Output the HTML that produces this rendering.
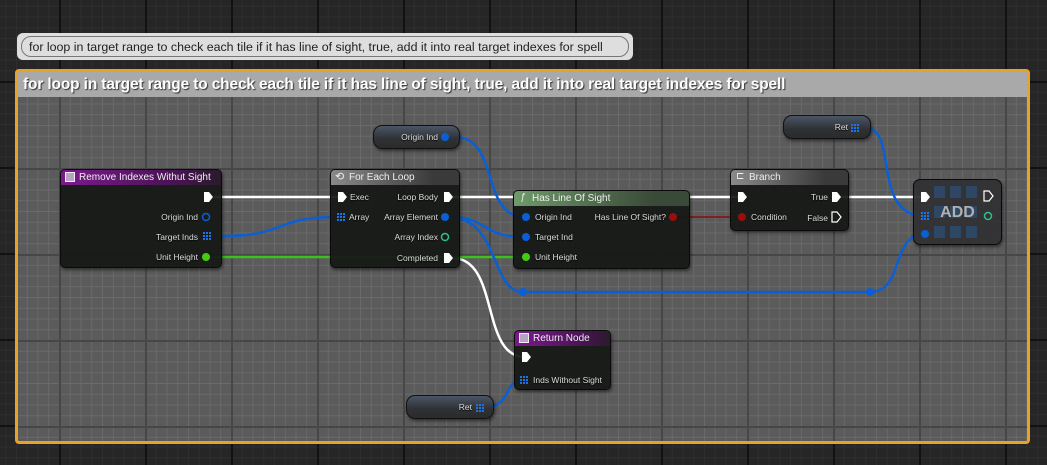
<!DOCTYPE html>
<html><head><style>
*{margin:0;padding:0;box-sizing:border-box}
body{width:1047px;height:465px;overflow:hidden;position:relative;font-family:"Liberation Sans",sans-serif;
background-color:#262626;
background-image:
linear-gradient(90deg,#121212 2px,transparent 2px),
linear-gradient(#121212 2px,transparent 2px),
linear-gradient(90deg,#2e2e2e 1px,transparent 1px),
linear-gradient(#2e2e2e 1px,transparent 1px);
background-size:86px 86px,86px 86px,10.75px 10.75px,10.75px 10.75px;
background-position:59px 81px,59px 81px,59px 81px,59px 81px;}
.bubble{position:absolute;left:17px;top:33px;width:616px;height:27px;background:#dedede;border-radius:6px;}
.bubble span{position:absolute;left:4px;top:3px;right:4px;bottom:3px;border:1px solid #777;border-radius:10px;font-size:12.4px;color:#222;padding:3px 0 0 7px;white-space:nowrap}
.comment{position:absolute;left:15px;top:69px;width:1015px;height:375px;border:3px solid #e8a228;border-radius:4px;
background-color:#5b5b5b;
background-image:
linear-gradient(90deg,#474747 2px,transparent 2px),
linear-gradient(#474747 2px,transparent 2px),
linear-gradient(90deg,#6a6a6a 1px,transparent 1px),
linear-gradient(#6a6a6a 1px,transparent 1px);
background-size:86px 86px,86px 86px,10.75px 10.75px,10.75px 10.75px;
background-position:41px 10px,41px 10px,41px 10px,41px 10px;}
.ctitle{position:absolute;left:0;top:0;right:0;height:25px;background:#a9a9a9;color:#fff;font-weight:bold;font-size:15.4px;padding:4px 0 0 5px;text-shadow:1px 1px 1px #333;white-space:nowrap;letter-spacing:-0.1px}
.node{position:absolute;background:rgba(22,24,22,.93);border:1px solid #0a0a0a;border-radius:5px;box-shadow:1px 2px 3px rgba(0,0,0,.5);font-size:9px;color:#ddd}
.hdr{height:15px;border-radius:4px 4px 0 0;color:#eee;font-size:10px;padding:2px 0 0 18px;position:relative}
.lbl{position:absolute;font-size:8.5px;color:#ddd;white-space:nowrap;text-shadow:0 1px 1px #000}
.r{text-align:right;width:120px}
.var{position:absolute;height:24px;border-radius:9px;background:linear-gradient(#4a5566,#2f3133 60%,#2b2b2b);border:1px solid #111;box-shadow:1px 2px 3px rgba(0,0,0,.5)}
svg{position:absolute;left:0;top:0}
</style></head><body>
<div class="bubble"><span>for loop in target range to check each tile if it has line of sight, true, add it into real target indexes for spell</span></div>
<div class="comment"><div class="ctitle">for loop in target range to check each tile if it has line of sight, true, add it into real target indexes for spell</div></div>

<svg width="1047" height="465">
<g fill="none" stroke-width="2.5">
<path d="M214 197 H342" stroke="#fff"/>
<path d="M452 197 H742" stroke="#fff"/>
<path d="M840 197 H925" stroke="#fff"/>
<path d="M452 258 C500 258,480 357,525 357" stroke="#fff"/>
<path d="M214 257 H525" stroke="#3fbf1f"/>
<path d="M222 236 C290 236,270 217,340 217" stroke="#0a5fd6"/>
<path d="M455 137 C500 137,480 217,525 217" stroke="#0a5fd6"/>
<path d="M448 217 C490 217,480 237,525 237" stroke="#0a5fd6"/>
<path d="M448 217 C500 217,490 292,523 292 H870 C905 292,890 234,925 234" stroke="#0a5fd6"/>
<path d="M864 127 C900 127,870 216,925 216" stroke="#0a5fd6"/>
<path d="M487 407 C510 407,505 380,522 380" stroke="#0a5fd6"/>
<path d="M675 217 H742" stroke="#8a0c0c" stroke-width="1.5"/>
</g>
<circle cx="523" cy="292" r="4" fill="#0a5fd6"/><circle cx="870" cy="292" r="4" fill="#0a5fd6"/>
</svg>

<div class="node" style="left:60px;top:169px;width:162px;height:99px">
<div class="hdr" style="background:linear-gradient(90deg,#7a1a8c,#4a1454 70%,#2a1a2c)"><span style="position:absolute;left:4px;top:2px;width:10px;height:10px;background:#b9a3c4;border:1px solid #eee"></span>Remove Indexes Withut Sight</div>
</div>
<div class="node" style="left:330px;top:169px;width:130px;height:99px">
<div class="hdr" style="background:linear-gradient(90deg,#8a8a8a,#3a3a3a 80%)"><span style="position:absolute;left:4px;top:0px;font-size:11px">⟲</span>For Each Loop</div>
</div>
<div class="node" style="left:513px;top:190px;width:177px;height:79px">
<div class="hdr" style="background:linear-gradient(90deg,#6e9a6a,#3a4a38 80%)"><span style="position:absolute;left:6px;top:1px;font-style:italic">ƒ</span>Has Line Of Sight</div>
</div>
<div class="node" style="left:730px;top:169px;width:119px;height:62px">
<div class="hdr" style="background:linear-gradient(90deg,#8a8a8a,#3a3a3a 80%)"><span style="position:absolute;left:5px;top:1px">⊏</span>Branch</div>
</div>
<div class="node" style="left:913px;top:179px;width:89px;height:66px;background:rgba(50,50,52,.95);border-radius:7px">
<div style="position:absolute;left:20px;top:6px;width:48px;height:52px;background-image:linear-gradient(90deg,#2e4a6a 11px,transparent 11px),linear-gradient(#505052 0,transparent 0);background-size:16px 100%;opacity:.9;-webkit-mask:linear-gradient(#000 12px,transparent 12px,transparent 20px,#000 20px,#000 32px,transparent 32px,transparent 40px,#000 40px);mask:linear-gradient(#000 12px,transparent 12px,transparent 20px,#000 20px,#000 32px,transparent 32px,transparent 40px,#000 40px)"></div>
<div style="position:absolute;left:0;right:0;top:24px;text-align:center;font-weight:bold;font-size:16px;color:#b0b0b0">ADD</div>
</div>
<div class="node" style="left:514px;top:330px;width:97px;height:60px">
<div class="hdr" style="background:linear-gradient(90deg,#7a1a8c,#4a1454 70%,#2a1a2c)"><span style="position:absolute;left:4px;top:2px;width:10px;height:10px;background:#b9a3c4;border:1px solid #eee"></span>Return Node</div>
</div>
<div class="var" style="left:373px;top:125px;width:87px"></div>
<div class="var" style="left:783px;top:115px;width:88px"></div>
<div class="var" style="left:406px;top:395px;width:88px"></div>

<svg width="1047" height="465">
<g fill="#fff">
<path d="M204 192 h5 l4 5 l-4 5 h-5z"/>
<path d="M338 192 h5 l4 5 l-4 5 h-5z"/>
<path d="M444 192 h5 l4 5 l-4 5 h-5z"/>
<path d="M444 253 h5 l4 5 l-4 5 h-5z"/>
<path d="M738 192 h5 l4 5 l-4 5 h-5z"/>
<path d="M832 192 h5 l4 5 l-4 5 h-5z"/>
<path d="M921 192 h5 l4 5 l-4 5 h-5z"/>
<path d="M522 352 h5 l4 5 l-4 5 h-5z"/>
</g>
<g fill="none" stroke="#fff" stroke-width="1.2">
<path d="M832 212 h5 l4 5 l-4 5 h-5z"/>
<path d="M984 191 h5 l4 5 l-4 5 h-5z"/>
</g>
<g fill="#0a5fd6">
<circle cx="445" cy="137" r="4"/><circle cx="445" cy="217" r="4"/>
<circle cx="526" cy="217" r="4"/><circle cx="526" cy="237" r="4"/>
<circle cx="925" cy="234" r="4"/>
</g>
<circle cx="206" cy="217" r="3.5" fill="none" stroke="#0a5fd6" stroke-width="1.5"/>
<circle cx="445" cy="237" r="3.5" fill="none" stroke="#2ec08a" stroke-width="1.5"/>
<circle cx="988" cy="216" r="3.5" fill="none" stroke="#2ec08a" stroke-width="1.5"/>
<circle cx="206" cy="257" r="4" fill="#44cc11"/><circle cx="526" cy="257" r="4" fill="#44cc11"/>
<circle cx="673" cy="217" r="4" fill="#9a0e0e"/><circle cx="742" cy="217" r="4" fill="#9a0e0e"/>
<g fill="#1c74e8">
<path d="M203 232h2v2h-2zM206 232h2v2h-2zM209 232h2v2h-2zM203 235h2v2h-2zM206 235h2v2h-2zM209 235h2v2h-2zM203 238h2v2h-2zM206 238h2v2h-2zM209 238h2v2h-2z"/>
<path d="M337 213h2v2h-2zM340 213h2v2h-2zM343 213h2v2h-2zM337 216h2v2h-2zM340 216h2v2h-2zM343 216h2v2h-2zM337 219h2v2h-2zM340 219h2v2h-2zM343 219h2v2h-2z"/>
<path d="M851 124h2v2h-2zM854 124h2v2h-2zM857 124h2v2h-2zM851 127h2v2h-2zM854 127h2v2h-2zM857 127h2v2h-2zM851 130h2v2h-2zM854 130h2v2h-2zM857 130h2v2h-2z"/>
<path d="M921 212h2v2h-2zM924 212h2v2h-2zM927 212h2v2h-2zM921 215h2v2h-2zM924 215h2v2h-2zM927 215h2v2h-2zM921 218h2v2h-2zM924 218h2v2h-2zM927 218h2v2h-2z"/>
<path d="M520 376h2v2h-2zM523 376h2v2h-2zM526 376h2v2h-2zM520 379h2v2h-2zM523 379h2v2h-2zM526 379h2v2h-2zM520 382h2v2h-2zM523 382h2v2h-2zM526 382h2v2h-2z"/>
<path d="M476 404h2v2h-2zM479 404h2v2h-2zM482 404h2v2h-2zM476 407h2v2h-2zM479 407h2v2h-2zM482 407h2v2h-2zM476 410h2v2h-2zM479 410h2v2h-2zM482 410h2v2h-2z"/>
</g>
</svg>

<div class="lbl r" style="left:78px;top:212px">Origin Ind</div>
<div class="lbl r" style="left:78px;top:232px">Target Inds</div>
<div class="lbl r" style="left:78px;top:252px">Unit Height</div>
<div class="lbl" style="left:350px;top:192px">Exec</div>
<div class="lbl" style="left:349px;top:212px">Array</div>
<div class="lbl r" style="left:318px;top:192px">Loop Body</div>
<div class="lbl r" style="left:318px;top:212px">Array Element</div>
<div class="lbl r" style="left:318px;top:232px">Array Index</div>
<div class="lbl r" style="left:318px;top:253px">Completed</div>
<div class="lbl r" style="left:318px;top:132px">Origin Ind</div>
<div class="lbl" style="left:535px;top:212px">Origin Ind</div>
<div class="lbl" style="left:535px;top:232px">Target Ind</div>
<div class="lbl" style="left:535px;top:252px">Unit Height</div>
<div class="lbl r" style="left:546px;top:212px">Has Line Of Sight?</div>
<div class="lbl" style="left:751px;top:212px">Condition</div>
<div class="lbl r" style="left:708px;top:192px">True</div>
<div class="lbl r" style="left:708px;top:213px">False</div>
<div class="lbl r" style="left:728px;top:122px">Ret</div>
<div class="lbl" style="left:533px;top:375px">Inds Without Sight</div>
<div class="lbl r" style="left:352px;top:402px">Ret</div>
</body></html>
